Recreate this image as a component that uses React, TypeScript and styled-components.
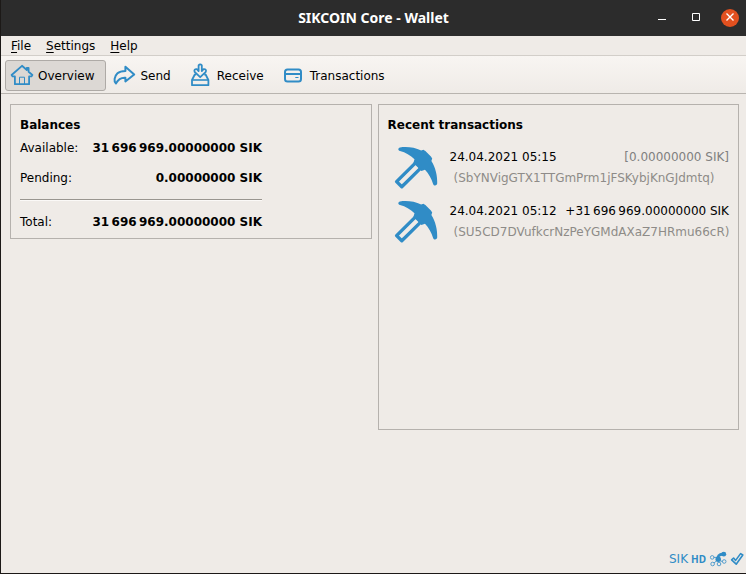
import React from "react";
import styled, { createGlobalStyle } from "styled-components";

const BLUE = "#308cc6";

const GlobalStyle = createGlobalStyle`
  * { box-sizing: border-box; }
  body {
    margin: 0;
    background: #efebe7;
    font-family: "DejaVu Sans", sans-serif;
    font-size: 12px;
    line-height: 16px;
    color: #000;
  }
  button { font: inherit; color: inherit; }
`;

const Window = styled.div`
  display: flex;
  flex-direction: column;
  min-height: 100vh;
  border-left: 1px solid #1c1917;
  border-bottom: 1px solid #1c1917;
  background: #efebe7;
`;

const TitleBar = styled.header`
  display: grid;
  grid-template-columns: 1fr auto 1fr;
  align-items: center;
  height: 36px;
  padding: 0 7px;
  background: #2c2c2c;
`;

const Title = styled.h1`
  grid-column: 2;
  margin: 0;
  font-family: "Noto Sans", sans-serif;
  font-size: 14px;
  line-height: 20px;
  font-weight: 700;
  color: #fff;
`;

const WindowControls = styled.div`
  display: flex;
  justify-content: flex-end;
  gap: 16px;
`;

const WindowButton = styled.button<{ $close?: boolean }>`
  display: flex;
  width: 18px;
  height: 18px;
  padding: 0;
  border: 0;
  border-radius: 50%;
  background: ${(p) => (p.$close ? "#e2501f" : "transparent")};
`;

const MenuBar = styled.nav`
  display: flex;
  height: 20px;
  padding: 2px 3px 0;
  border-bottom: 1px solid #d2cec9;
`;

const MenuItem = styled.button`
  height: 16px;
  padding: 0 8px 0 7px;
  border: 0;
  background: none;
  line-height: 16px;
  text-align: left;
`;

const Mnemonic = styled.span`
  text-decoration: underline;
  text-underline-offset: 2px;
  text-decoration-thickness: 1px;
`;

const ToolBar = styled.nav`
  display: flex;
  gap: 2px;
  height: 38px;
  padding: 4px;
  border-bottom: 1px solid #b8b4af;
  background: linear-gradient(#f8f5f2, #efebe7);
`;

const ToolButton = styled.button<{ $active?: boolean }>`
  display: flex;
  align-items: center;
  gap: 4px;
  height: 31px;
  padding: 0 10px 0 4px;
  border: 1px solid ${(p) => (p.$active ? "#aeaaa6" : "transparent")};
  border-radius: 3px;
  background: ${(p) => (p.$active ? "#dcd8d4" : "transparent")};
`;

const Content = styled.main`
  display: grid;
  grid-template-columns: 1fr 1fr;
  align-items: start;
  gap: 6px;
  flex: 1;
  padding: 10px 7px 10px 9px;
`;

const Panel = styled.section`
  min-width: 0;
  padding: 12px 9px 1px;
  border: 1px solid #b5b1ad;
`;

const PanelTitle = styled.h2`
  margin: 0;
  font-size: 12px;
  line-height: 16px;
  font-weight: 700;
`;

const BalanceTable = styled.table`
  width: 242px;
  border-collapse: collapse;
`;

const BalanceRow = styled.tr`
  height: 30px;
`;

const BalanceLabel = styled.th`
  padding: 0;
  font-weight: 400;
  text-align: left;
  white-space: nowrap;
`;

const BalanceValue = styled.td`
  padding: 0;
  font-weight: 700;
  text-align: right;
  white-space: nowrap;
`;

const DividerCell = styled.td`
  height: 14px;
  padding: 0;
`;

const Divider = styled.hr`
  height: 2px;
  margin: 0;
  border: 0;
  border-top: 1px solid #99958f;
  border-bottom: 1px solid #fbf9f7;
`;

const TransactionList = styled.ul`
  min-height: 295px;
  margin: 0;
  padding: 8px 0 0;
  list-style: none;
`;

const TransactionItem = styled.li`
  display: grid;
  grid-template-columns: 48px 1fr;
  column-gap: 10px;
  height: 54px;
  padding: 3px 0 0 4px;
`;

const TransactionText = styled.div`
  min-width: 0;
  line-height: 21px;
  padding-top: 3px;
`;

const TransactionHead = styled.div`
  display: flex;
  justify-content: space-between;
  white-space: nowrap;
`;

const Amount = styled.span<{ $muted?: boolean }>`
  color: ${(p) => (p.$muted ? "#808080" : "#000")};
`;

const Address = styled.div`
  padding-left: 4px;
  overflow: hidden;
  white-space: nowrap;
  color: #8e8b88;
`;

const StatusBar = styled.footer`
  display: flex;
  align-items: center;
  justify-content: flex-end;
  gap: 3px;
  height: 28px;
  padding-right: 2px;
  color: ${BLUE};
`;

const HdBadge = styled.span`
  font-family: "Noto Sans", sans-serif;
  font-size: 10px;
  font-weight: 700;
`;

const Icon = styled.svg`
  display: block;
  flex: none;
  overflow: visible;
`;

const HomeIcon = () => (
  <Icon width="24" height="24" viewBox="0 0 24 24" fill="none" stroke={BLUE} strokeWidth="1.8" strokeLinejoin="round">
    <path d="M12 1.8 1.6 11 2.6 12.4H4.9V20.2H19.1V12.4H21.4L22.4 11 18.6 7.8V4H16.8V6z" />
    <path d="M9.5 20V13.2H14.5V20" strokeWidth="1" />
  </Icon>
);

const SendIcon = () => (
  <Icon width="24" height="24" viewBox="0 0 24 24" fill="none" stroke={BLUE} strokeWidth="2" strokeLinejoin="round">
    <path d="M12.4 2.7 21.2 10.5 12.4 17.5V13.7C7.7 13.3 5.2 15.3 2.9 19.4.6 17.5 1.2 12.4 4.5 9.3 6.7 7.3 9.2 6.9 12.4 6.9z" />
  </Icon>
);

const ReceiveIcon = () => (
  <Icon width="24" height="24" viewBox="0 0 24 24" fill="none" stroke={BLUE} strokeWidth="1.8" strokeLinejoin="round">
    <path d="M7.2 10.5H5.8L3 16V21.2H19.4V16L16.6 10.5H15.2" />
    <path d="M3.4 16H19" strokeWidth="1.6" />
    <path d="M9.6 7V1.4Q11.2-.8 12.8 1.4V7L14.6 5.2Q17.8 5 16.8 7.8L11.2 13.2 5.6 7.8Q4.6 5 7.8 5.2z" />
  </Icon>
);

const CardIcon = () => (
  <Icon width="24" height="24" viewBox="0 0 24 24" fill="none" stroke={BLUE} strokeWidth="2">
    <rect x="3" y="5.5" width="16" height="12" rx="2.5" />
    <path d="M3 10H19" />
    <path d="M13.3 13.5H16.5" strokeWidth="1" />
  </Icon>
);

const PickaxeIcon = () => (
  <Icon width="48" height="48" viewBox="0 0 48 48" fill={BLUE}>
    <path d="M8 3.4C14.5 2.3 22.5 3.2 29.2 6.5L31.3 5.7 33.4 7 38.9 12.4 40.2 14.6 39.4 17C43.6 23.5 45.5 32 45.2 39.6 44.8 42.1 41.8 42.1 41.2 40.2 39.4 34.5 36.6 29.6 33 25.8L29.4 27 21.4 19 22.5 15.2C18.4 11.4 13.6 8.4 8 7 5.8 6.2 5.8 4 8 3.4z" />
    <path d="M23 19.4 4.6 37.6 9.8 42.8 28.4 24.4" fill="none" stroke={BLUE} strokeWidth="3.4" strokeLinejoin="round" />
    <path d="M24.6 23 9.8 37.8" fill="none" stroke="#efebe7" strokeWidth="3" />
  </Icon>
);

const NetworkIcon = () => (
  <Icon width="18" height="18" viewBox="0 0 18 18" fill="none" stroke={BLUE}>
    <path d="M4.5 7.4H8M5 13 8 10.5M10 10.5 13.5 11.5" strokeWidth="0.8" />
    <path d="M9 9.5Q8 4.5 14 4" strokeWidth="2.8" />
    <circle cx="14.8" cy="4.2" r="2.4" fill={BLUE} stroke="none" />
    <circle cx="9.2" cy="9.2" r="2.7" fill={BLUE} stroke="none" />
    <circle cx="3.2" cy="7.4" r="1.8" strokeWidth="0.8" />
    <circle cx="3.6" cy="14" r="1.8" strokeWidth="0.8" />
    <circle cx="10" cy="14" r="1.8" strokeWidth="0.8" />
    <circle cx="15.2" cy="11.5" r="1.8" strokeWidth="0.8" />
  </Icon>
);

const SyncedIcon = () => (
  <Icon width="14" height="14" viewBox="0 0 14 14" fill="none" stroke={BLUE} strokeWidth="1.6" strokeLinejoin="round">
    <path d="M1.6 7.8 3.6 6 5.6 8.4 10.6 1.6 12.8 3 6.2 12.2z" />
  </Icon>
);

const menus = ["File", "Settings", "Help"];

const tools = [
  { label: "Overview", icon: <HomeIcon />, active: true },
  { label: "Send", icon: <SendIcon /> },
  { label: "Receive", icon: <ReceiveIcon /> },
  { label: "Transactions", icon: <CardIcon /> },
];

const transactions = [
  {
    date: "24.04.2021 05:15",
    amount: "[0.00000000 SIK]",
    address: "(SbYNVigGTX1TTGmPrm1jFSKybjKnGJdmtq)",
    muted: true,
  },
  {
    date: "24.04.2021 05:12",
    amount: "+31\u2009696\u2009969.00000000 SIK",
    address: "(SU5CD7DVufkcrNzPeYGMdAXaZ7HRmu66cR)",
  },
];

export default function App() {
  return (
    <>
      <GlobalStyle />
      <Window>
        <TitleBar>
          <Title>SIKCOIN Core - Wallet</Title>
          <WindowControls>
            <WindowButton aria-label="Minimize">
              <Icon width="18" height="18" viewBox="0 0 18 18"><path d="M5 10.5h8" stroke="#fff" /></Icon>
            </WindowButton>
            <WindowButton aria-label="Maximize">
              <Icon width="18" height="18" viewBox="0 0 18 18"><path d="M5.5 4.5h7v7h-7z" fill="none" stroke="#fff" /></Icon>
            </WindowButton>
            <WindowButton $close aria-label="Close">
              <Icon width="18" height="18" viewBox="0 0 18 18"><path d="m5.5 4.5 7 7m0-7-7 7" stroke="#fff" strokeWidth="1.4" /></Icon>
            </WindowButton>
          </WindowControls>
        </TitleBar>
        <MenuBar>
          {menus.map((name) => (
            <MenuItem key={name}>
              <Mnemonic>{name[0]}</Mnemonic>
              {name.slice(1)}
            </MenuItem>
          ))}
        </MenuBar>
        <ToolBar>
          {tools.map((tool) => (
            <ToolButton key={tool.label} $active={tool.active}>
              {tool.icon}
              {tool.label}
            </ToolButton>
          ))}
        </ToolBar>
        <Content>
          <Panel>
            <PanelTitle>Balances</PanelTitle>
            <BalanceTable>
              <tbody>
                <BalanceRow>
                  <BalanceLabel scope="row">Available:</BalanceLabel>
                  <BalanceValue>{"31\u2009696\u2009969.00000000 SIK"}</BalanceValue>
                </BalanceRow>
                <BalanceRow>
                  <BalanceLabel scope="row">Pending:</BalanceLabel>
                  <BalanceValue>0.00000000 SIK</BalanceValue>
                </BalanceRow>
                <tr>
                  <DividerCell colSpan={2}><Divider /></DividerCell>
                </tr>
                <BalanceRow>
                  <BalanceLabel scope="row">Total:</BalanceLabel>
                  <BalanceValue>{"31\u2009696\u2009969.00000000 SIK"}</BalanceValue>
                </BalanceRow>
              </tbody>
            </BalanceTable>
          </Panel>
          <Panel>
            <PanelTitle>Recent transactions</PanelTitle>
            <TransactionList>
              {transactions.map((tx) => (
                <TransactionItem key={tx.date}>
                  <PickaxeIcon />
                  <TransactionText>
                    <TransactionHead>
                      <span>{tx.date}</span>
                      <Amount $muted={tx.muted}>{tx.amount}</Amount>
                    </TransactionHead>
                    <Address>{tx.address}</Address>
                  </TransactionText>
                </TransactionItem>
              ))}
            </TransactionList>
          </Panel>
        </Content>
        <StatusBar>
          <span>SIK</span>
          <HdBadge>HD</HdBadge>
          <NetworkIcon />
          <SyncedIcon />
        </StatusBar>
      </Window>
    </>
  );
}
